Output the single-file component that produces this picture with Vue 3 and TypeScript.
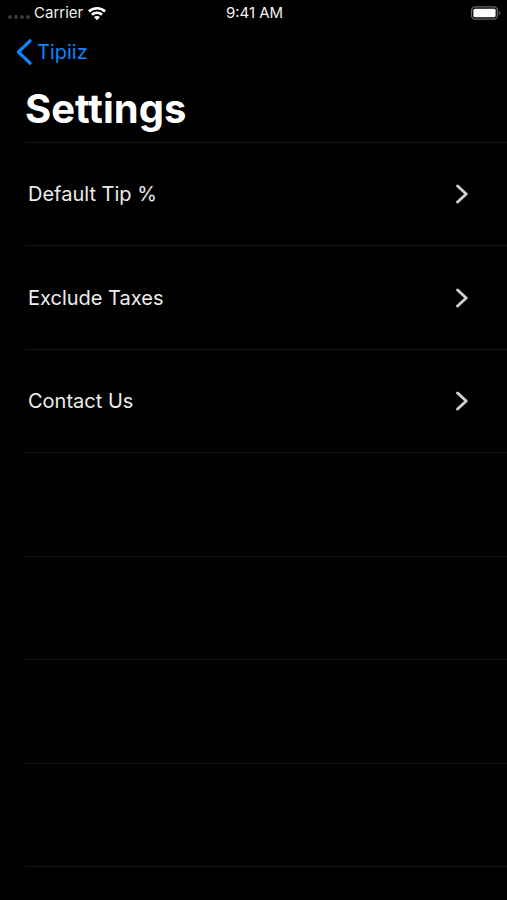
<script setup lang="ts">
interface SettingItem {
  label: string
  href: string
}

const items: SettingItem[] = [
  { label: 'Default Tip %', href: '#default-tip' },
  { label: 'Exclude Taxes', href: '#exclude-taxes' },
  { label: 'Contact Us', href: '#contact-us' },
]

const emptyRows = 4
</script>

<template>
  <div class="screen">
    <header class="status">
      <div class="status-left">
        <span class="dots"><i v-for="n in 4" :key="n" class="dot"></i></span>
        <span>Carrier</span>
        <svg class="wifi" width="20" height="15" viewBox="0 0 20 15" aria-hidden="true">
          <path d="M10 1C6.5 1 3.3 2.3 1 4.5L2.8 6.4A10.4 10.4 0 0 1 17.2 6.4L19 4.5C16.7 2.3 13.5 1 10 1Z" />
          <path d="M10 5.6C7.8 5.6 5.7 6.4 4.1 7.8L5.9 9.7A6.1 6.1 0 0 1 14.1 9.7L15.9 7.8C14.3 6.4 12.2 5.6 10 5.6Z" />
          <path d="M10 10.1C8.8 10.1 7.8 10.5 7 11.1L10 14.2L13 11.1C12.2 10.5 11.2 10.1 10 10.1Z" />
        </svg>
      </div>
      <time class="clock">9:41 AM</time>
      <div class="status-right">
        <svg width="31" height="14" viewBox="0 0 31 14" aria-hidden="true">
          <rect x="1.6" y="0.9" width="25.8" height="12.2" rx="3.6" fill="none" stroke="#6a6a6a" stroke-width="1.3" />
          <rect x="3.4" y="2.7" width="22.2" height="8.6" rx="1.6" fill="#fff" />
          <path d="M28.8 5V9.2C30 8.8 30.4 8 30.4 7.1S30 5.4 28.8 5Z" fill="#5a5a5a" />
        </svg>
      </div>
    </header>

    <nav class="nav">
      <a class="back" href="#tipiiz">
        <svg width="16" height="26" viewBox="0 0 16 26" aria-hidden="true">
          <path d="M14 1.8L2.4 13L14 24.2" fill="none" stroke="#0f84fa" stroke-width="3.2" stroke-linecap="round" stroke-linejoin="round" />
        </svg>
        <span>Tipiiz</span>
      </a>
    </nav>

    <main class="content">
      <h1 class="title">Settings</h1>
      <ul class="list">
        <li v-for="item in items" :key="item.label" class="row">
          <a class="link" :href="item.href">
            <span>{{ item.label }}</span>
            <svg width="14" height="20" viewBox="0 0 14 20" aria-hidden="true">
              <path d="M2.6 2L11.2 10L2.6 18" fill="none" stroke="#d0d0d0" stroke-width="2.9" stroke-linecap="round" stroke-linejoin="round" />
            </svg>
          </a>
        </li>
        <li v-for="n in emptyRows" :key="n" class="row" aria-hidden="true"></li>
      </ul>
    </main>
  </div>
</template>

<style>
body {
  background: #000;
}
</style>

<style scoped>
.screen {
  box-sizing: border-box;
  display: flex;
  flex-direction: column;
  min-height: 100vh;
  padding-bottom: 33px;
  background: #000;
  color: #fff;
  font-family: Inter, "Liberation Sans", sans-serif;
}

.status {
  display: grid;
  grid-template-columns: 1fr auto 1fr;
  align-items: center;
  height: 26px;
  padding: 0 6px 0 8px;
  color: #f0f0f0;
  font-size: 15px;
  font-weight: 400;
  line-height: 18px;
}

.status-left {
  display: flex;
  align-items: center;
  gap: 4px;
}

.dots {
  display: flex;
  gap: 2px;
  padding-top: 8px;
}

.dot {
  width: 4px;
  height: 4px;
  border-radius: 50%;
  background: #3c3c3c;
}

.wifi {
  fill: #fff;
}

.status-right {
  display: flex;
  justify-content: flex-end;
}

.nav {
  display: flex;
  align-items: center;
  height: 52px;
  padding-left: 16px;
}

.back {
  display: flex;
  align-items: center;
  gap: 5px;
  color: #0f84fa;
  font-size: 20px;
  text-decoration: none;
}

.content {
  display: flex;
  flex: 1;
  flex-direction: column;
  padding-left: 25px;
}

.title {
  margin: 0;
  padding: 3px 0 5px;
  font-size: 40px;
  font-weight: 700;
  line-height: 56px;
}

.list {
  display: grid;
  flex: 1;
  grid-auto-rows: minmax(64px, 1fr);
  margin: 0;
  padding: 0;
  border-top: 1px solid #141414;
  list-style: none;
}

.row {
  border-bottom: 1px solid #141414;
}

.link {
  display: flex;
  align-items: center;
  justify-content: space-between;
  height: 100%;
  padding: 0 38px 0 3px;
  color: #ececec;
  font-size: 20px;
  text-decoration: none;
}
</style>
